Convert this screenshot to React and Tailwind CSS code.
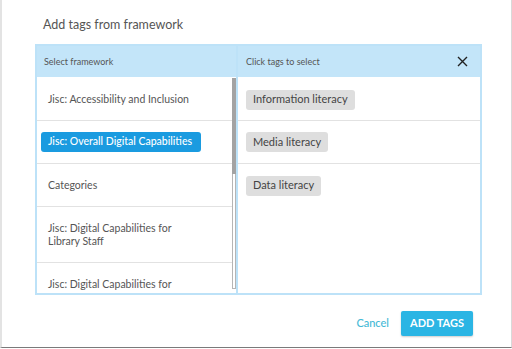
import React from "react";

const left = [
  { label: "Jisc: Accessibility and Inclusion", h: "h-[44px] pt-[2px]" },
  { label: "Jisc: Overall Digital Capabilities", h: "h-[43px]", selected: true },
  { label: "Categories", h: "h-[43px]" },
  { label: "Jisc: Digital Capabilities for Library Staff", h: "h-[56px]" },
  { label: "Jisc: Digital Capabilities for", h: "h-[56px] items-start pt-[15px]" },
];

const tags = [
  { label: "Information literacy", h: "h-[44px] pt-[2px]" },
  { label: "Media literacy", h: "h-[43px]" },
  { label: "Data literacy", h: "h-[43px]", last: true },
];

export default function App() {
  const font = { fontFamily: "Lato, 'Liberation Sans', sans-serif" };
  return (
    <div
      style={font}
      className="w-[512px] h-[348px] bg-white border-l-2 border-l-[#e3e3e3] border-r border-r-[#d9d9d9] border-b border-b-[#7a7a7a] flex flex-col overflow-hidden"
    >
      <div className="pl-[41px] pt-[17px] text-[12.5px] leading-[16px] text-[#555]">
        Add tags from framework
      </div>
      <div className="ml-[33px] mt-[11px] w-[447px] h-[251px] border-2 border-[#bde2f8] flex">
        {/* left column */}
        <div className="w-[201px] border-r-2 border-r-[#bde2f8] flex flex-col">
          <div className="h-[31px] shrink-0 bg-[#c3e5f9] flex items-center px-[7px] text-[9px] text-[#555]">
            Select framework
          </div>
          <div className="flex-1 flex overflow-hidden">
            <div className="flex-1 flex flex-col overflow-hidden">
              {left.map((r, i) => (
                <div
                  key={i}
                  className={`${r.h} shrink-0 border-b border-b-[#e2e2e2] flex items-center px-[4px]`}
                >
                  {r.selected ? (
                    <span className="bg-[#1a9be0] text-white rounded-[3px] px-[7px] h-[20px] w-[160px] flex items-center text-[10.5px] font-medium whitespace-nowrap">
                      {r.label}
                    </span>
                  ) : (
                    <span className="px-[7px] text-[10.5px] leading-[13px] text-[#555] w-[160px]">
                      {r.label}
                    </span>
                  )}
                </div>
              ))}
            </div>
            <div className="w-[4px] pt-[1px] flex flex-col">
              <div className="h-[96px] bg-[#a3a3a3]" />
              <div className="h-[115px] border border-t-0 border-[#b5b5b5]" />
            </div>
          </div>
        </div>
        {/* right column */}
        <div className="flex-1 flex flex-col">
          <div className="h-[31px] shrink-0 bg-[#c3e5f9] flex items-center justify-between pl-[8px] pr-[12px] text-[9px] text-[#555]">
            <span>Click tags to select</span>
            <svg width="11" height="11" viewBox="0 0 11 11" fill="none">
              <path d="M1 1L10 10M10 1L1 10" stroke="#222" strokeWidth="1.4" />
            </svg>
          </div>
          <div className="flex-1 flex flex-col">
            {tags.map((t, i) => (
              <div
                key={i}
                className={`${t.h} shrink-0 flex items-center px-[8px] ${t.last ? "" : "border-b border-b-[#e2e2e2]"}`}
              >
                <span className="bg-[#dedede] text-[#444] rounded-[3px] px-[7px] h-[20px] flex items-center text-[11px]">
                  {t.label}
                </span>
              </div>
            ))}
          </div>
        </div>
      </div>
      <div className="flex justify-end items-center mt-[16px] pr-[38px] gap-[12px]">
        <span className="text-[11px] font-medium text-[#45b9d6]">Cancel</span>
        <button className="w-[72px] h-[25px] bg-[#2bb5e4] text-white text-[11px] font-bold rounded-[2px] shadow-[0_1px_2px_rgba(0,0,0,0.2)]">
          ADD TAGS
        </button>
      </div>
    </div>
  );
}
